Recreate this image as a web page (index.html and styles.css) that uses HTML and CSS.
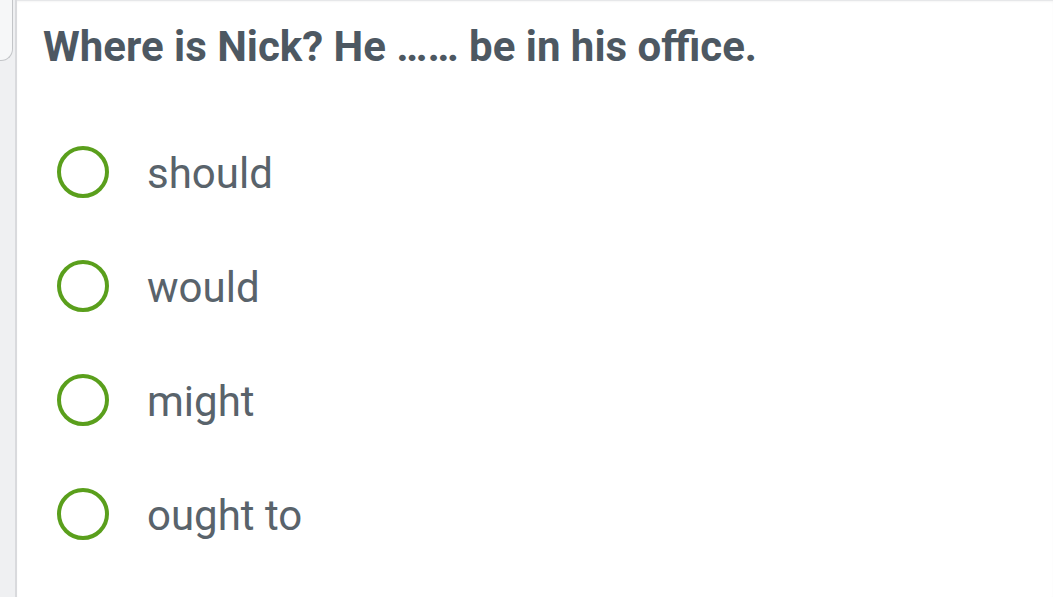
FILE: index.html
```html
<!DOCTYPE html>
<html>
<head>
<meta charset="utf-8">
<link rel="stylesheet" href="styles.css">
</head>
<body>
<div class="page">
  <div class="side">
    <div class="side-card"></div>
  </div>
  <div class="main">
    <h1 class="question">Where is Nick? He …… be in his office.</h1>
    <div class="options">
      <div class="option"><span class="radio"></span><span class="label">should</span></div>
      <div class="option"><span class="radio"></span><span class="label">would</span></div>
      <div class="option"><span class="radio"></span><span class="label">might</span></div>
      <div class="option"><span class="radio"></span><span class="label">ought to</span></div>
    </div>
  </div>
</div>
</body>
</html>
```
FILE: styles.css
```css
html, body {
  margin: 0;
  padding: 0;
  background: #ffffff;
}
body {
  font-family: Roboto, "Liberation Sans", sans-serif;
  width: 1060px;
  height: 597px;
  overflow: hidden;
}
.page {
  display: flex;
  height: 597px;
}
.side {
  width: 15px;
  background: #eff0f2;
  border-right: 2px solid #d9dadd;
  flex-shrink: 0;
}
.side-card {
  height: 60px;
  width: 12px;
  background: #f6f7f8;
  border-right: 1px solid #c3c5c8;
  border-bottom: 1px solid #c3c5c8;
  border-bottom-right-radius: 12px;
}
.main {
  flex: 1;
  padding: 21px 0 0 26px;
  border-top: 1px solid #e6e7e9;
  box-shadow: inset 0 1px 2px rgba(0,0,0,0.04);
  margin-right: 7px;
}
.question {
  margin: 0;
  font-size: 42px;
  line-height: 50px;
  font-weight: 700;
  color: #4d5862;
}
.options {
  margin-top: 43px;
  padding-left: 14px;
}
.option {
  display: flex;
  align-items: center;
  height: 114px;
}
.radio {
  width: 44px;
  height: 44px;
  border: 4.5px solid #5a9f1c;
  border-radius: 50%;
  flex-shrink: 0;
}
.label {
  margin-left: 38px;
  font-size: 42px;
  line-height: 50px;
  padding-top: 4px;
  color: #59636b;
}
```
